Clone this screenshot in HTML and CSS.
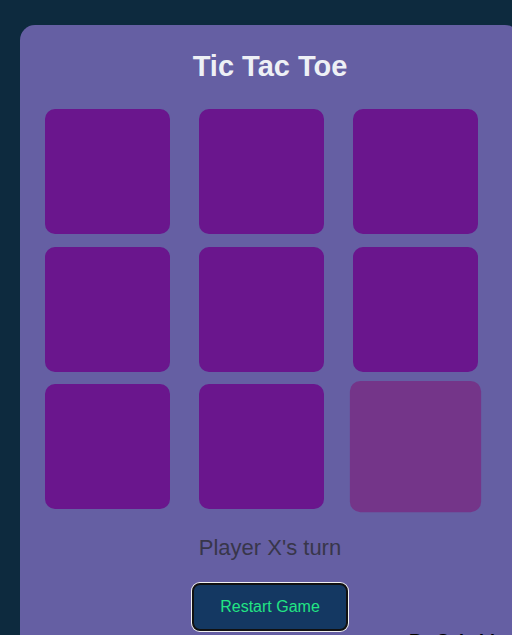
FILE: index.html
```html
<!DOCTYPE html>
<html lang="en">
<head>
<meta charset="UTF-8">
<title>Tic Tac Toe</title>
<link rel="stylesheet" href="styles.css">
</head>
<body>
<div class="card">
  <h1 class="title">Tic Tac Toe</h1>
  <div class="board">
    <div class="cell"></div>
    <div class="cell"></div>
    <div class="cell"></div>
    <div class="cell"></div>
    <div class="cell"></div>
    <div class="cell"></div>
    <div class="cell"></div>
    <div class="cell"></div>
    <div class="cell cell-hover"></div>
  </div>
  <p class="status">Player X's turn</p>
  <div class="actions">
    <button class="restart">Restart Game</button>
  </div>
  <p class="credit">By Sakshi</p>
</div>
</body>
</html>
```
FILE: styles.css
```css
html, body {
  margin: 0;
  padding: 0;
}
body {
  background: #0d2a3e;
  font-family: "Liberation Sans", Arial, sans-serif;
  height: 635px;
  overflow: hidden;
}
.card {
  margin: 25px 0 0 20px;
  width: 500px;
  box-sizing: border-box;
  padding: 25px;
  background: #655fa3;
  border-radius: 15px;
}
.title {
  margin: 0 0 27px;
  text-align: center;
  font-size: 29px;
  font-weight: bold;
  color: #eef0f5;
  line-height: 32px;
}
.board {
  display: grid;
  grid-template-columns: repeat(3, 1fr);
  grid-auto-rows: 125px;
  gap: 12px 12px;
  row-gap: 12.5px;
}
.cell {
  width: 125px;
  height: 125px;
  background: #6a168d;
  border-radius: 10px;
}
.cell-hover {
  background: #743589;
  transform: scale(1.05);
}
.status {
  margin: 26px 0 0;
  text-align: center;
  font-size: 22px;
  line-height: 25px;
  color: #38364a;
}
.actions {
  display: flex;
  justify-content: center;
  margin-top: 23px;
}
.restart {
  width: 156px;
  height: 48px;
  background: #143862;
  color: #22e584;
  font-family: "Liberation Sans", Arial, sans-serif;
  font-size: 16px;
  border: 2px solid #111;
  box-shadow: 0 0 0 1px #f2f2f2;
  border-radius: 8px;
}
.credit {
  margin: 0;
  text-align: right;
  font-weight: bold;
  font-size: 18px;
  color: #000;
}
```
